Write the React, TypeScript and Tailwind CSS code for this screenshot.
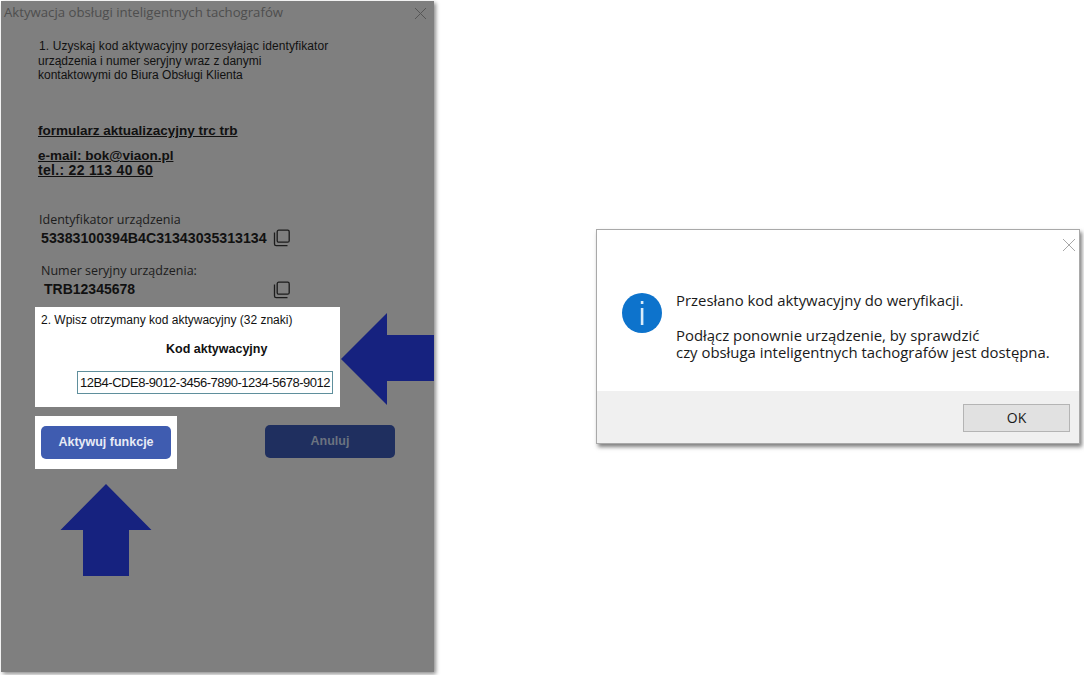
import { FC } from "react";

const CopyIcon: FC = () => (
  <svg width="18" height="18" viewBox="0 0 18 18" fill="none" stroke="#1c1c1c" strokeWidth="1.3" className="shrink-0">
    <rect x="4.2" y="1.2" width="12" height="12" rx="1.5" />
    <path d="M1.500 3.500v11.500a1.600 1.600 0 0 0 1.600 1.600h11.400" />
  </svg>
);

const LeftWindow: FC = () => (
  <div className="relative ml-px mt-px flex h-[671px] w-[433px] shrink-0 flex-col bg-[#7f7f7f] font-['Liberation_Sans',sans-serif] text-[#111] shadow-[2px_2px_4px_rgba(0,0,0,0.45)]">
    <div className="flex h-[24px] items-center justify-between pl-[3px] pr-[7px] font-['Open_Sans',sans-serif] text-[13.2px] text-[#4e4e4e]">
      <span>Aktywacja obsługi inteligentnych tachografów</span>
      <svg width="13" height="13" viewBox="0 0 13 13" stroke="#565656" strokeWidth="1">
        <path d="M1 1l11 11M12 1L1 12" />
      </svg>
    </div>
    <div className="ml-[37px] mt-[14px] text-[12px] leading-[14.6px]">
      <p className="ml-px tracking-[0.1px]">1. Uzyskaj kod aktywacyjny porzesyłając identyfikator</p>
      <p>urządzenia i numer seryjny wraz z danymi</p>
      <p>kontaktowymi do Biura Obsługi Klienta</p>
    </div>
    <a className="ml-[37px] mt-[40px] w-fit text-[13.5px] font-bold leading-[15px] underline">
      formularz aktualizacyjny trc trb
    </a>
    <a className="ml-[37px] mt-[10px] w-fit text-[13.5px] font-bold leading-[15px] underline">e-mail: bok@viaon.pl</a>
    <a className="ml-[37px] w-fit text-[14px] font-bold leading-[15px] tracking-[0.3px] underline">
      tel.: 22 113 40 60
    </a>

    <span className="ml-[38px] mt-[34px] font-['Open_Sans',sans-serif] text-[12.5px] leading-[16px] text-[#1c1c1c]">
      Identyfikator urządzenia
    </span>
    <div className="ml-[40px] mt-[1px] flex h-[18px] items-center">
      <span className="w-[232px] pt-[2px] text-[14.2px] font-bold">53383100394B4C31343035313134</span>
      <CopyIcon />
    </div>
    <span className="ml-[40px] mt-[16px] font-['Open_Sans',sans-serif] text-[12.5px] leading-[16px] text-[#1c1c1c]">
      Numer seryjny urządzenia:
    </span>
    <div className="ml-[43px] mt-[2px] flex h-[18px] items-center">
      <span className="w-[229px] text-[14px] font-bold">TRB12345678</span>
      <CopyIcon />
    </div>

    <div className="ml-[34px] mt-[8px] flex h-[100px] w-[305px] flex-col bg-white">
      <p className="ml-[6px] mt-[6px] text-[12px] leading-[14px]">2. Wpisz otrzymany kod aktywacyjny (32 znaki)</p>
      <p className="ml-[131px] mt-[15px] text-[12.5px] font-bold leading-[14px]">Kod aktywacyjny</p>
      <div className="ml-[42px] mt-[15px] flex h-[23px] w-[256px] items-center justify-center border border-[#5f8f9c] text-[13px] tracking-[-0.48px]">
        12B4-CDE8-9012-3456-7890-1234-5678-9012
      </div>
    </div>

    <div className="ml-[34px] mt-[9px] flex items-start">
      <div className="flex h-[53px] w-[142px] items-center justify-center bg-white">
        <button className="h-[33px] w-[130px] rounded-[5px] bg-[#3f5cb0] text-[12.5px] font-bold text-[#e8ebf5]">
          Aktywuj funkcje
        </button>
      </div>
      <button className="ml-[88px] mt-[9px] h-[33px] w-[130px] rounded-[5px] bg-[#1f2f5f] text-[12.5px] font-bold text-[#6b7380]">
        Anuluj
      </button>
    </div>

    {/* arrows sit on top of the dimmed dialog */}
    <svg className="absolute left-[339px] top-[311px]" width="94" height="93" viewBox="0 0 94 93" fill="#16227f">
      <path d="M1 47L47 1v22h47v46H47v24z" />
    </svg>
    <svg className="absolute left-[59px] top-[483px]" width="92" height="93" viewBox="0 0 92 93" fill="#16227f">
      <path d="M46 0l45.500 46H69v46H23V46H0.500z" />
    </svg>
  </div>
);

const RightWindow: FC = () => (
  <div className="ml-[162px] mt-[229px] flex h-[215px] w-[484px] shrink-0 flex-col border border-[#a9a9a9] bg-white font-['Open_Sans',sans-serif] text-[#1a1a1a] shadow-[2px_3px_4px_rgba(0,0,0,0.5)]">
    <div className="flex h-[161px] flex-col">
      <div className="flex justify-end pr-[3px] pt-[8px]">
        <svg width="14" height="14" viewBox="0 0 14 14" stroke="#a8a8a8" strokeWidth="1">
          <path d="M1 1l12 12M13 1L1 13" />
        </svg>
      </div>
      <div className="ml-[25px] mt-[40px] flex items-start">
        <svg width="40" height="40" viewBox="0 0 40 40" className="mt-[1px] shrink-0">
          <circle cx="20" cy="20" r="20" fill="#0d73cc" />
          <rect x="18.800" y="8" width="2.600" height="3" fill="#d9ecfa" />
          <rect x="18.800" y="15" width="2.600" height="17" fill="#d9ecfa" />
        </svg>
        <div className="ml-[14px] text-[14.9px] leading-[17.500px]">
          <p>Przesłano kod aktywacyjny do weryfikacji.</p>
          <p className="mt-[17px]">
            Podłącz ponownie urządzenie, by sprawdzić
            <br />
            czy obsługa inteligentnych tachografów jest dostępna.
          </p>
        </div>
      </div>
    </div>
    <div className="flex flex-1 items-center justify-end bg-[#f0f0f0] pr-[9px] pt-[1px]">
      <button className="h-[28px] w-[107px] border border-[#b4b4b4] bg-[#e1e1e1] text-[14px]">OK</button>
    </div>
  </div>
);

const App: FC = () => (
  <div className="flex h-[675px] w-[1084px] items-start overflow-hidden bg-white">
    <LeftWindow />
    <RightWindow />
  </div>
);

export default App;
